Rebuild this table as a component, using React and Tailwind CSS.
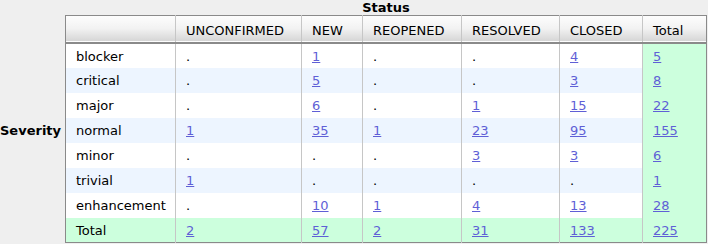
const cols = ['UNCONFIRMED', 'NEW', 'REOPENED', 'RESOLVED', 'CLOSED', 'Total'];
const widths = ['w-[110px]', 'w-[126px]', 'w-[61px]', 'w-[99px]', 'w-[98px]', 'w-[83px]', 'w-[64px]'];

const rows = [
  ['blocker', '.', '1', '.', '.', '4', '5'],
  ['critical', '.', '5', '.', '.', '3', '8'],
  ['major', '.', '6', '.', '1', '15', '22'],
  ['normal', '1', '35', '1', '23', '95', '155'],
  ['minor', '.', '.', '.', '3', '3', '6'],
  ['trivial', '1', '.', '.', '.', '.', '1'],
  ['enhancement', '.', '10', '1', '4', '13', '28'],
];
const total = ['Total', '2', '57', '2', '31', '133', '225'];

function Cell({ value, last }) {
  return (
    <td className={`h-[25px] px-[10px] pt-[2px] pb-0 border-l border-[#c6c6c6] align-middle ${last ? 'bg-[#ccffdd]' : ''}`}>
      {value === '.' ? <span>.</span> : <a href="#" className="text-[#5f5fd6] underline">{value}</a>}
    </td>
  );
}

export default function App() {
  return (
    <div className="w-[708px] h-[244px] bg-[#efefef] text-[13px] text-black overflow-hidden" style={{ fontFamily: '"DejaVu Sans", Verdana, sans-serif' }}>
      <div className="h-[15px] pl-[65px] flex">
        <div className="w-[642px] text-center font-bold leading-[15px]">Status</div>
      </div>
      <div className="flex">
        <div className="w-[65px] flex items-center font-bold pt-[4px]">Severity</div>
        <table className="border-collapse border border-[#8a8a8a] w-[642px] table-fixed">
          <thead>
            <tr className="bg-gradient-to-b from-[#fdfdfd] via-[#f2f2f2] to-[#d6d6d6] border-b-2 border-[#8a8a8a]">
              <th className={`${widths[0]} h-[27px] p-0`}></th>
              {cols.map((c, i) => (
                <th key={c} className={`${widths[i + 1]} h-[27px] px-[10px] pt-[3px] pb-0 font-normal text-left border-l border-[#c6c6c6]`}>{c}</th>
              ))}
            </tr>
          </thead>
          <tbody>
            {rows.map((r, ri) => (
              <tr key={r[0]} className={ri % 2 === 1 ? 'bg-[#edf5ff]' : 'bg-white'}>
                <td className="h-[25px] px-[10px] pt-[2px] pb-0">{r[0]}</td>
                {r.slice(1).map((v, i) => (
                  <Cell key={i} value={v} last={i === 5} />
                ))}
              </tr>
            ))}
            <tr className="bg-[#ccffdd]">
              <td className="h-[25px] px-[10px] pt-[2px] pb-0">{total[0]}</td>
              {total.slice(1).map((v, i) => (
                <Cell key={i} value={v} last={i === 5} />
              ))}
            </tr>
          </tbody>
        </table>
      </div>
    </div>
  );
}
